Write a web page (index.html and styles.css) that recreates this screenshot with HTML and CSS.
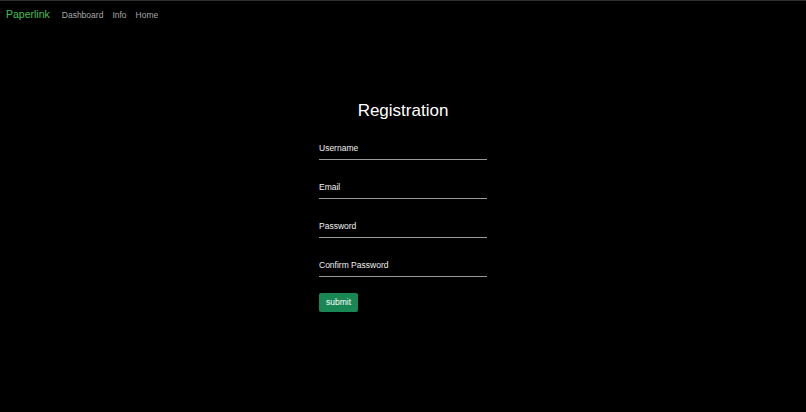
FILE: index.html
```html
<!DOCTYPE html>
<html lang="en">
<head>
<meta charset="utf-8">
<title>Paperlink - Registration</title>
<link rel="stylesheet" href="styles.css">
</head>
<body>
<nav class="navbar">
  <a class="brand" href="#">Paperlink</a>
  <div class="nav-links">
    <a class="nav-link" href="#">Dashboard</a>
    <a class="nav-link" href="#">Info</a>
    <a class="nav-link" href="#">Home</a>
  </div>
</nav>
<main class="main">
  <form class="form">
    <h1 class="title">Registration</h1>
    <div class="field"><span class="label">Username</span></div>
    <div class="field"><span class="label">Email</span></div>
    <div class="field"><span class="label">Password</span></div>
    <div class="field"><span class="label">Confirm Password</span></div>
    <div class="actions"><button type="button" class="btn">submit</button></div>
  </form>
</main>
</body>
</html>
```
FILE: styles.css
```css
html, body {
  margin: 0;
  padding: 0;
  background: #000;
  height: 100%;
}
body {
  font-family: "Liberation Sans", Arial, sans-serif;
  color: #fff;
}
.navbar {
  border-top: 1px solid #2e2e2e;
  display: flex;
  align-items: baseline;
  padding: 7px 6px;
  line-height: 12px;
}
.brand {
  color: #43c04f;
  font-size: 10.5px;
  text-decoration: none;
  margin-right: 12px;
}
.nav-links {
  display: flex;
  align-items: baseline;
  gap: 9px;
}
.nav-link {
  color: #a8a8a8;
  font-size: 8.5px;
  text-decoration: none;
}
.main {
  display: flex;
  justify-content: center;
  padding-top: 73px;
}
.form {
  width: 168px;
  display: flex;
  flex-direction: column;
}
.title {
  margin: 0 0 22px;
  font-size: 17px;
  font-weight: normal;
  line-height: 20px;
  text-align: center;
  color: #fff;
}
.field {
  padding-bottom: 5px;
  border-bottom: 1px solid #9a9a9a;
  margin-bottom: 22px;
}
.field:nth-last-child(2) {
  margin-bottom: 16px;
}
.label {
  display: block;
  font-size: 8.5px;
  line-height: 11px;
  color: #f0f0f0;
}
.actions {
  display: flex;
}
.btn {
  background: #198754;
  color: #fff;
  border: none;
  border-radius: 2px;
  font-family: "Liberation Sans", Arial, sans-serif;
  font-size: 8.5px;
  height: 19px;
  padding: 0 7px;
  line-height: 19px;
}
```
